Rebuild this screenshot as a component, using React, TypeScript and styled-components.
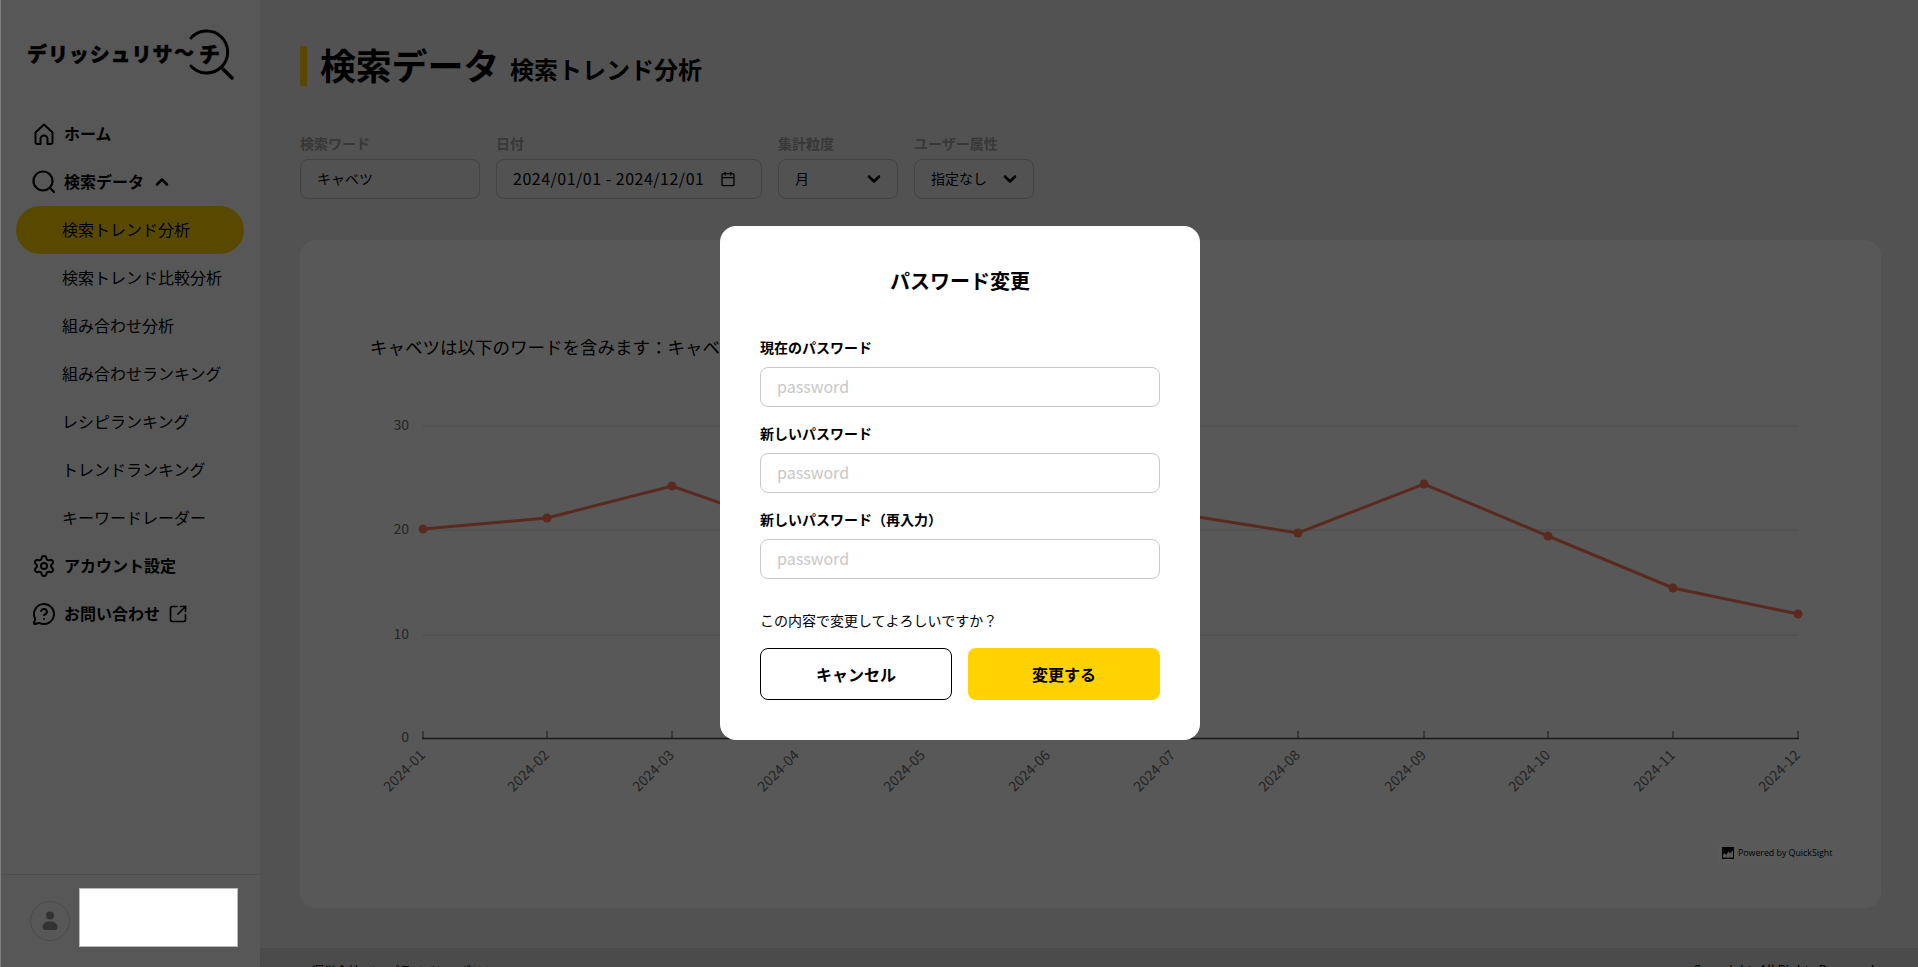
import styled, { createGlobalStyle } from 'styled-components';
import { ChevronDown, ChevronUp, Calendar, Settings, MessageCircleQuestion, SquareArrowOutUpRight } from 'lucide-react';

const FONT = '"Noto Sans CJK JP", "Noto Sans", sans-serif';

const GlobalStyle = createGlobalStyle`
  * { box-sizing: border-box; }
  html, body {
    margin: 0;
    height: 100%;
    overflow: hidden;
    background: #808080;
    font-family: ${FONT};
    color: #000;
  }
`;

const Page = styled.div`
  display: flex;
  height: 967px;
  margin-left: 1px;
  overflow: hidden;
`;

const Sidebar = styled.aside`
  width: 259px;
  flex-shrink: 0;
  background: #fafafa;
  display: flex;
  flex-direction: column;
`;

const LogoRow = styled.div`
  height: 110px;
  padding: 26px 0 0 26px;
  display: flex;
  align-items: flex-start;
`;

const LogoText = styled.span`
  font-size: 20px;
  font-weight: 900;
  line-height: 56px;
  letter-spacing: 0.9px;
  white-space: nowrap;
  -webkit-text-stroke: 0.4px #000;
`;

const LogoMarkSvg = styled.svg`
  margin-left: -1px;
  text {
    font-family: ${FONT};
    font-weight: 900;
    stroke: #000;
    stroke-width: 0.4px;
  }
`;

const Nav = styled.nav`
  display: flex;
  flex-direction: column;
  flex: 1;
`;

const NavItem = styled.div`
  height: 48px;
  padding: 0 0 2px 31px;
  display: flex;
  align-items: center;
  gap: 8px;
  font-size: 16px;
  font-weight: 700;
  svg {
    flex-shrink: 0;
    margin-top: 2px;
  }
`;

const SubItem = styled.div<{ $active?: boolean }>`
  height: 48px;
  margin-left: 15px;
  width: 228px;
  padding: 0 0 2px 46px;
  display: flex;
  align-items: center;
  font-size: 16px;
  border-radius: 24px;
  background: ${({ $active }) => ($active ? '#ffd200' : 'transparent')};
`;

const UserBar = styled.div`
  height: 93px;
  border-top: 1px solid #dcdcdc;
  padding: 13px 0 0 29px;
  display: flex;
  gap: 9px;
`;

const Avatar = styled.div`
  width: 40px;
  height: 40px;
  margin-top: 13px;
  border-radius: 50%;
  border: 1px solid #d4d4d4;
  display: flex;
  align-items: center;
  justify-content: center;
`;

const NameMask = styled.div`
  position: relative;
  z-index: 20;
  width: 159px;
  height: 59px;
  background: #fff;
  border: 1px solid #bbb;
`;

const Main = styled.main`
  flex: 1;
  min-width: 0;
  background: #ebebeb;
  display: flex;
  flex-direction: column;
`;

const Content = styled.div`
  padding: 46px 37px 40px 40px;
`;

const TitleRow = styled.div`
  height: 40px;
  border-left: 7px solid #ffd200;
  padding-left: 13px;
  display: flex;
  align-items: center;
  gap: 11px;
`;

const PageTitle = styled.h1`
  margin: 0 0 4px;
  font-size: 36px;
  font-weight: 700;
  line-height: 40px;
  letter-spacing: -0.2px;
`;

const PageSub = styled.h2`
  margin: 6px 0 0;
  font-size: 24px;
  font-weight: 700;
  line-height: 34px;
`;

const Filters = styled.div`
  margin-top: 47px;
  display: flex;
  gap: 16px;
`;

const FilterBlock = styled.div<{ $w: number }>`
  width: ${({ $w }) => $w}px;
`;

const FilterLabel = styled.div`
  font-size: 14px;
  font-weight: 700;
  line-height: 20px;
  margin-bottom: 6px;
  color: #a0a0a0;
`;

const FilterBox = styled.div<{ $pr?: number }>`
  height: 40px;
  padding: 0 ${({ $pr }) => $pr ?? 13}px 2px 16px;
  border: 1px solid #bdbdbd;
  border-radius: 8px;
  display: flex;
  align-items: center;
  justify-content: space-between;
  font-size: 14px;
  svg { margin-top: 2px; }
`;

const DateValue = styled.span`
  font-size: 16px;
  letter-spacing: 0.5px;
`;

const ChartCard = styled.section`
  position: relative;
  margin-top: 41px;
  height: 668px;
  border-radius: 16px;
  background: #fbfbfb;
  overflow: hidden;
`;

const ChartNote = styled.p`
  margin: 0;
  padding: 94px 0 0 70px;
  font-size: 17.500px;
  line-height: 26px;
`;

const ChartSvg = styled.svg`
  display: block;
  margin-top: 20px;
`;

const PoweredBadge = styled.div`
  position: absolute;
  left: 1414px;
  top: 602px;
  width: 127px;
  height: 22px;
  background: #fff;
  display: flex;
  align-items: center;
  gap: 4px;
  padding-left: 8px;
  font-family: "Open Sans", sans-serif;
  font-size: 8.800px;
`;

const Footer = styled.footer`
  height: 60px;
  padding: 14px 40px 0 52px;
  background: #d6d6d6;
  display: flex;
  justify-content: space-between;
  font-size: 12px;
  line-height: 18px;
`;

const FooterLinks = styled.div`
  display: flex;
  gap: 12px;
`;

const FooterRight = styled.span`
  font-size: 13px;
  margin-top: -1px;
`;

const Overlay = styled.div`
  position: fixed;
  top: 0;
  left: 1px;
  right: 0;
  bottom: 0;
  background: rgba(0, 0, 0, 0.65);
  z-index: 10;
`;

const ModalWrap = styled.div`
  position: fixed;
  inset: 0;
  z-index: 30;
  padding: 0 0 1px 2px;
  display: flex;
  align-items: center;
  justify-content: center;
`;

const Modal = styled.div`
  width: 480px;
  height: 514px;
  padding: 40px;
  background: #fff;
  border-radius: 16px;
`;

const ModalTitle = styled.h3`
  margin: 0 0 41px;
  font-size: 20px;
  font-weight: 700;
  line-height: 30px;
  text-align: center;
`;

const FieldLabel = styled.label`
  display: block;
  font-size: 14px;
  font-weight: 700;
  line-height: 20px;
  margin-bottom: 10px;
`;

const FieldInput = styled.input`
  display: block;
  width: 100%;
  height: 40px;
  margin-bottom: 16px;
  padding: 0 16px 2px;
  border: 1px solid #c8c8c8;
  border-radius: 8px;
  font-family: ${FONT};
  font-size: 16px;
  outline: none;
  &::placeholder { color: #c8c8c8; }
`;

const Confirm = styled.p`
  margin: 31px 0 18px;
  font-size: 14px;
  line-height: 20px;
`;

const Buttons = styled.div`
  display: grid;
  grid-template-columns: 1fr 1fr;
  gap: 16px;
`;

const Button = styled.button<{ $primary?: boolean }>`
  height: 52px;
  padding-bottom: 2px;
  border-radius: 8px;
  border: ${({ $primary }) => ($primary ? 'none' : '1px solid #000')};
  background: ${({ $primary }) => ($primary ? '#ffd200' : '#fff')};
  font-family: ${FONT};
  font-size: 16px;
  font-weight: 700;
  color: #000;
`;

const subItems = ['検索トレンド比較分析', '組み合わせ分析', '組み合わせランキング', 'レシピランキング', 'トレンドランキング', 'キーワードレーダー'];

const points = [
  [423, 529], [547, 518], [672, 486], [797, 530], [923, 540], [1048, 525],
  [1173, 513], [1298, 533], [1424, 484], [1548, 536], [1673, 588], [1798, 614],
];
const gridLines = [
  { y: 426, label: '30' },
  { y: 530, label: '20' },
  { y: 635, label: '10' },
];
const months = ['01', '02', '03', '04', '05', '06', '07', '08', '09', '10', '11', '12'];

const HomeIcon = () => (
  <svg width="24" height="24" viewBox="0 0 24 24" fill="none" stroke="#000" strokeWidth="2" strokeLinejoin="round">
    <path d="M3.500 10.500 12 2.500l8.500 8V20a2 2 0 0 1-2 2H15.500v-5a3.500 3.500 0 0 0-7 0v5H5.500a2 2 0 0 1-2-2Z" />
  </svg>
);

const SearchIcon = () => (
  <svg width="24" height="24" viewBox="0 0 24 24" fill="none" stroke="#000" strokeWidth="2.200" strokeLinecap="round">
    <circle cx="11" cy="11" r="9.500" />
    <path d="M18 18l4 4" />
  </svg>
);

const UserIcon = () => (
  <svg width="16" height="20" viewBox="0 0 16 20" fill="#929292">
    <circle cx="8" cy="4.500" r="4" />
    <path d="M0.500 16c0-3.500 3-5.500 7.500-5.500s7.500 2 7.500 5.500c0 2-1 3-3 3h-9c-2 0-3-1-3-3Z" />
  </svg>
);

const Logomark = () => (
  <LogoMarkSvg width="62" height="60" viewBox="0 0 62 60" fill="none">
    <path d="M19 12A21 21 0 1 1 19 40" stroke="#000" strokeWidth="3" strokeLinecap="round" />
    <path d="M51 43l9 9" stroke="#000" strokeWidth="3.500" strokeLinecap="round" />
    <text x="2" y="34" fontSize="20" fill="#000">〜</text>
    <text x="27" y="36" fontSize="21" fill="#000">チ</text>
  </LogoMarkSvg>
);

const TrendChart = () => (
  <ChartSvg width="1581" height="528" viewBox="300 380 1581 528">
    {gridLines.map((g) => (
      <g key={g.y}>
        <line x1="422" x2="1798" y1={g.y} y2={g.y} stroke="#dedede" />
        <text x="409" y={g.y + 4} textAnchor="end" fontSize="14" fill="#6a6a6a" fontFamily={FONT}>{g.label}</text>
      </g>
    ))}
    <text x="409" y="742" textAnchor="end" fontSize="14" fill="#6a6a6a" fontFamily={FONT}>0</text>
    <line x1="422" x2="1799" y1="738.500" y2="738.500" stroke="#4a4a4a" strokeWidth="1.500" />
    {points.map(([x], i) => (
      <g key={months[i]}>
        <line x1={x} x2={x} y1="731" y2="738" stroke="#4a4a4a" />
        <text
          x={x + 3}
          y="756"
          textAnchor="end"
          fontSize="14"
          fill="#6a6a6a"
          fontFamily={FONT}
          transform={`rotate(-45 ${x + 3} 756)`}
        >
          {`2024-${months[i]}`}
        </text>
      </g>
    ))}
    <polyline points={points.map((p) => p.join(',')).join(' ')} fill="none" stroke="#ff7a55" strokeWidth="3" />
    {points.map(([x, y]) => (
      <circle key={x} cx={x} cy={y} r="4.500" fill="#ff7a55" />
    ))}
  </ChartSvg>
);

export default function App() {
  return (
    <>
      <GlobalStyle />
      <Page>
        <Sidebar>
          <LogoRow>
            <LogoText>デリッシュリサ</LogoText>
            <Logomark />
          </LogoRow>
          <Nav>
            <NavItem>
              <HomeIcon />
              ホーム
            </NavItem>
            <NavItem>
              <SearchIcon />
              検索データ
              <ChevronUp size={20} strokeWidth={3} />
            </NavItem>
            <SubItem $active>検索トレンド分析</SubItem>
            {subItems.map((s) => (
              <SubItem key={s}>{s}</SubItem>
            ))}
            <NavItem>
              <Settings size={24} strokeWidth={2} />
              アカウント設定
            </NavItem>
            <NavItem>
              <MessageCircleQuestion size={24} strokeWidth={2} />
              お問い合わせ
              <SquareArrowOutUpRight size={20} strokeWidth={2} />
            </NavItem>
          </Nav>
          <UserBar>
            <Avatar>
              <UserIcon />
            </Avatar>
            <NameMask />
          </UserBar>
        </Sidebar>
        <Main>
          <Content>
            <TitleRow>
              <PageTitle>検索データ</PageTitle>
              <PageSub>検索トレンド分析</PageSub>
            </TitleRow>
            <Filters>
              <FilterBlock $w={180}>
                <FilterLabel>検索ワード</FilterLabel>
                <FilterBox>キャベツ</FilterBox>
              </FilterBlock>
              <FilterBlock $w={266}>
                <FilterLabel>日付</FilterLabel>
                <FilterBox $pr={25}>
                  <DateValue>2024/01/01 - 2024/12/01</DateValue>
                  <Calendar size={16} strokeWidth={2} />
                </FilterBox>
              </FilterBlock>
              <FilterBlock $w={120}>
                <FilterLabel>集計粒度</FilterLabel>
                <FilterBox>
                  月
                  <ChevronDown size={20} strokeWidth={3} />
                </FilterBox>
              </FilterBlock>
              <FilterBlock $w={120}>
                <FilterLabel>ユーザー属性</FilterLabel>
                <FilterBox>
                  指定なし
                  <ChevronDown size={20} strokeWidth={3} />
                </FilterBox>
              </FilterBlock>
            </Filters>
            <ChartCard>
              <ChartNote>キャベツは以下のワードを含みます：キャベツ、きゃべつ</ChartNote>
              <TrendChart />
              <PoweredBadge>
                <svg width="12" height="12" viewBox="0 0 12 12">
                  <path d="M0 0h12v12H0Z M1 10.500h10V3L8 6.500 6.500 4.500 4 8 2.500 6 1 8Z" fill="#000" fillRule="evenodd" />
                </svg>
                Powered by QuickSight
              </PoweredBadge>
            </ChartCard>
          </Content>
          <Footer>
            <FooterLinks>
              <span>運営会社</span>
              <span>|</span>
              <span>プライバシーポリシー</span>
            </FooterLinks>
            <FooterRight>Copyright. All Rights Reserved.</FooterRight>
          </Footer>
        </Main>
      </Page>
      <Overlay />
      <ModalWrap>
        <Modal>
          <ModalTitle>パスワード変更</ModalTitle>
          <FieldLabel>現在のパスワード</FieldLabel>
          <FieldInput placeholder="password" />
          <FieldLabel>新しいパスワード</FieldLabel>
          <FieldInput placeholder="password" />
          <FieldLabel>新しいパスワード（再入力）</FieldLabel>
          <FieldInput placeholder="password" />
          <Confirm>この内容で変更してよろしいですか？</Confirm>
          <Buttons>
            <Button>キャンセル</Button>
            <Button $primary>変更する</Button>
          </Buttons>
        </Modal>
      </ModalWrap>
    </>
  );
}
